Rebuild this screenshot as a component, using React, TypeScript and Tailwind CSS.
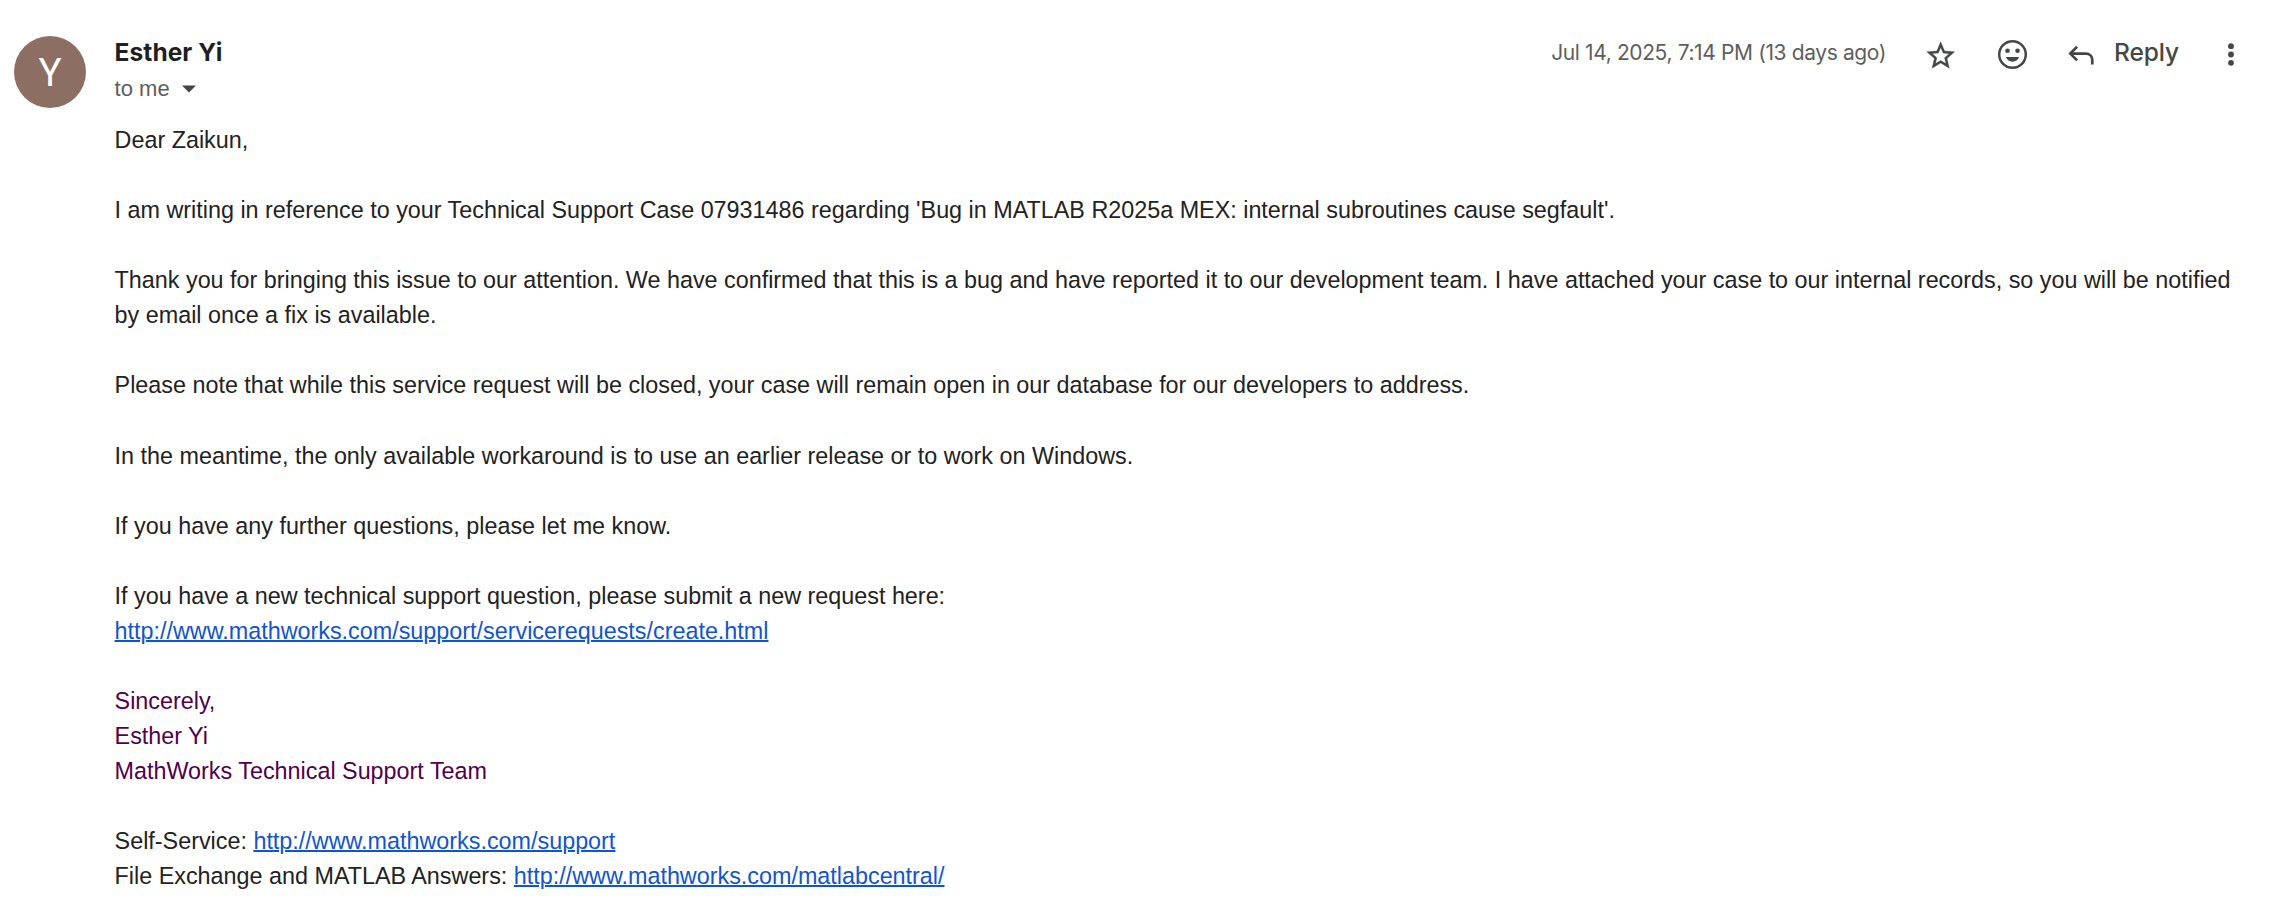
import type { ReactNode } from "react";

function StarIcon() {
  return (
    <svg width="33.4" height="33.4" viewBox="0 0 24 24" fill="#444746" stroke="#444746" strokeWidth="0.25">
      <path d="M22 9.24l-7.19-.62L12 2 9.19 8.63 2 9.24l5.46 4.73L5.82 21 12 17.27 18.18 21l-1.63-7.03L22 9.24zM12 15.4l-3.76 2.27 1-4.28-3.32-2.88 4.38-.38L12 6.1l1.71 4.04 4.38.38-3.32 2.88 1 4.28L12 15.4z" />
    </svg>
  );
}

function SmileIcon() {
  return (
    <svg width="35" height="35" viewBox="0 0 35 35">
      <circle cx="17.5" cy="17.5" r="13.3" fill="none" stroke="#444746" strokeWidth="2.5" />
      <circle cx="12.5" cy="13.8" r="2.3" fill="#444746" />
      <circle cx="22.5" cy="13.8" r="2.3" fill="#444746" />
      <path d="M10.9 20.1h13.2c-1.1 2.9-3.6 4.7-6.6 4.7s-5.5-1.8-6.6-4.7z" fill="#444746" />
    </svg>
  );
}

function ReplyIcon() {
  return (
    <svg width="35" height="35" viewBox="0 0 35 35" fill="none" stroke="#444746" strokeWidth="2.7">
      <path d="M13.1 9.8L6.3 16.6l6.8 6.8" />
      <path d="M6.3 16.6h15.4c4 0 6.6 2.7 6.6 6.6v4.4" />
    </svg>
  );
}

function MoreIcon() {
  return (
    <svg width="10" height="35" viewBox="0 0 10 35" fill="#444746">
      <circle cx="5" cy="9.2" r="2.9" />
      <circle cx="5" cy="17.5" r="2.9" />
      <circle cx="5" cy="25.8" r="2.9" />
    </svg>
  );
}

function Link({ children }: { children: string }) {
  return (
    <a href={children} className="text-[#1155cc] underline decoration-2">
      {children}
    </a>
  );
}

function Paragraph({ children }: { children: ReactNode }) {
  return <p className="mb-[35.08px]">{children}</p>;
}

export default function App() {
  return (
    <main className="flex h-[898px] w-[2269px] overflow-hidden bg-white font-['Liberation_Sans',Arial,sans-serif] text-[#222222]">
      <div className="w-[114.6px] shrink-0 pt-9 pl-3.5">
        <div className="flex size-[72px] items-center justify-center rounded-full bg-[#8d6e63] pt-0.5 font-[Roboto,sans-serif] text-[38.5px] leading-none text-white">
          Y
        </div>
      </div>
      <div className="flex-1">
        <header className="flex h-[122.8px] items-start justify-between">
          <div className="pt-[35px]">
            <h1 className="h-[36px] font-[Inter,sans-serif] text-[24.5px] leading-[35px] font-bold tracking-[0.05px] whitespace-nowrap text-[#1f1f1f]">
              Esther Yi
            </h1>
            <div className="flex items-center gap-3 text-[22px] leading-[35px] text-[#5e5e5e]">
              <span>to me</span>
              <svg width="14" height="8" viewBox="0 0 14 8" fill="#444746">
                <path d="M0 .5h14L7 7.5z" />
              </svg>
            </div>
          </div>
          <div className="flex items-center pt-[36.5px] pr-[33px] text-[#5e5e5e]">
            <span className="mr-[37.5px] pb-[3px] font-[Inter,sans-serif] text-[21px] leading-8 tracking-[-0.38px] whitespace-nowrap">
              Jul 14, 2025, 7:14 PM (13 days ago)
            </span>
            <span className="mr-[38.5px] pt-[2px]">
              <StarIcon />
            </span>
            <span className="mr-[34px]">
              <SmileIcon />
            </span>
            <ReplyIcon />
            <span className="mr-[47px] ml-[14.5px] pb-1 font-[Inter,sans-serif] text-[24.5px] leading-[31px] font-medium tracking-[-0.1px] text-[#444746]">
              Reply
            </span>
            <MoreIcon />
          </div>
        </header>
        <article className="w-[2130px] text-[23.355px] leading-[35.08px]">
          <Paragraph>Dear Zaikun,</Paragraph>
          <Paragraph>
            I am writing in reference to your Technical Support Case 07931486 regarding 'Bug in MATLAB R2025a MEX:
            internal subroutines cause segfault'.
          </Paragraph>
          <Paragraph>
            Thank you for bringing this issue to our attention. We have confirmed that this is a bug and have reported
            it to our development team. I have attached your case to our internal records, so you will be notified
            <br />
            by email once a fix is available.
          </Paragraph>
          <Paragraph>
            Please note that while this service request will be closed, your case will remain open in our database for
            our developers to address.
          </Paragraph>
          <Paragraph>
            In the meantime, the only available workaround is to use an earlier release or to work on Windows.
          </Paragraph>
          <Paragraph>If you have any further questions, please let me know.</Paragraph>
          <Paragraph>
            If you have a new technical support question, please submit a new request here:
            <br />
            <Link>http://www.mathworks.com/support/servicerequests/create.html</Link>
          </Paragraph>
          <div className="text-[#500050]">
            <Paragraph>
              Sincerely,
              <br />
              Esther Yi
              <br />
              MathWorks Technical Support Team
            </Paragraph>
          </div>
          <p>
            Self-Service: <Link>http://www.mathworks.com/support</Link>
            <br />
            File Exchange and MATLAB Answers: <Link>http://www.mathworks.com/matlabcentral/</Link>
          </p>
        </article>
      </div>
    </main>
  );
}
